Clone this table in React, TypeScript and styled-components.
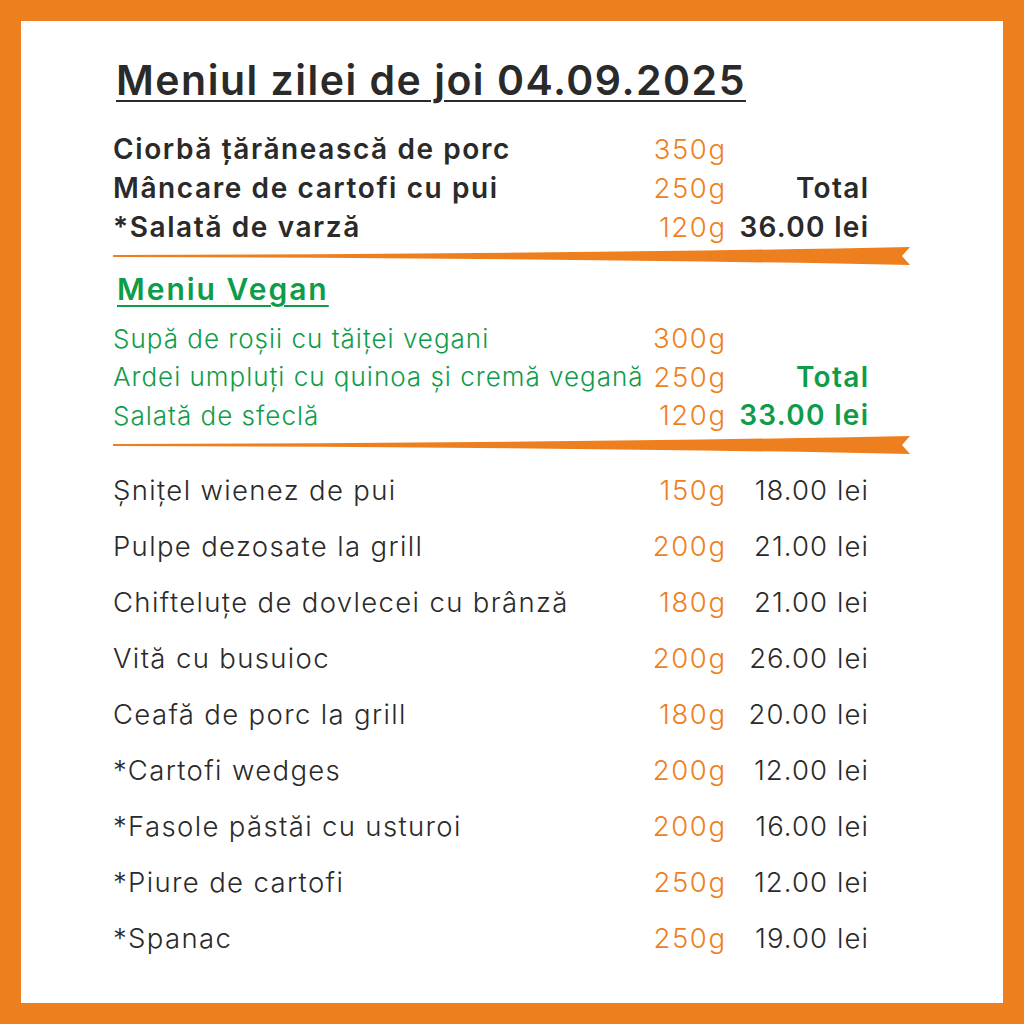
import React from "react";
import styled, { createGlobalStyle } from "styled-components";

const ORANGE = "#EE7F1E";
const GREEN = "#0E9C4A";
const DARK = "#2a2a2a";

const Global = createGlobalStyle`
  html, body { margin: 0; padding: 0; background: #fff; }
  body { font-family: Inter, "Open Sans", sans-serif; }
`;

const Frame = styled.div`
  width: 1024px;
  height: 1024px;
  box-sizing: border-box;
  border: 21px solid ${ORANGE};
  background: #fff;
  padding: 35px 0 0 92px;
  display: flex;
  flex-direction: column;
`;

const Title = styled.h1`
  margin: 0 0 25px 3px;
  font-size: 41px;
  line-height: 48px;
  font-weight: 600;
  letter-spacing: 1.5px;
  color: ${DARK};
  text-decoration: underline;
  text-decoration-thickness: 2px;
  text-underline-offset: 5px;
  white-space: nowrap;
`;

const Table = styled.div<{ $row: number; $top?: number }>`
  width: 755px;
  margin-top: ${(p) => p.$top ?? 0}px;
  display: grid;
  grid-template-columns: 1fr auto 143px;
  grid-auto-rows: ${(p) => p.$row}px;
  align-items: center;
  white-space: nowrap;
`;

const Name = styled.div<{ $tone: "bold" | "vegan" | "plain" }>`
  font-size: ${(p) => (p.$tone === "bold" ? 28 : p.$tone === "vegan" ? 26 : 27.5)}px;
  letter-spacing: ${(p) => (p.$tone === "bold" ? 1.6 : p.$tone === "vegan" ? 1 : 1.35)}px;
  font-weight: ${(p) => (p.$tone === "bold" ? 600 : 300)};
  color: ${(p) => (p.$tone === "vegan" ? GREEN : DARK)};
`;

const Weight = styled.div`
  font-size: 27.5px;
  letter-spacing: 1.6px;
  margin-right: -1.6px;
  font-weight: 300;
  color: ${ORANGE};
  text-align: right;
`;

const Price = styled.div<{ $tone: "total" | "vtotal" | "plain" }>`
  font-size: ${(p) => (p.$tone === "plain" ? 27.5 : 28)}px;
  letter-spacing: ${(p) => (p.$tone === "plain" ? 1.1 : 1.3)}px;
  margin-right: ${(p) => (p.$tone === "plain" ? -1.1 : -1.3)}px;
  text-align: right;
  font-weight: ${(p) => (p.$tone === "plain" ? 300 : 600)};
  color: ${(p) => (p.$tone === "vtotal" ? GREEN : DARK)};
`;

const Ribbon = styled.svg`
  display: block;
  width: 797px;
  height: 20px;
`;

const SubTitle = styled.h2`
  margin: 5px 0 12px 4px;
  font-size: 30px;
  line-height: 36px;
  font-weight: 600;
  letter-spacing: 2px;
  color: ${GREEN};
  text-decoration: underline;
  text-decoration-thickness: 2px;
  text-underline-offset: 5px;
`;

const Divider = () => (
  <Ribbon viewBox="0 0 797 20">
    <path d="M0 9 Q450 8 797 1 L789 10 L797 19 Q450 12 0 11 Z" fill={ORANGE} />
  </Ribbon>
);

const daily = [
  ["Ciorbă țărănească de porc", "350g", ""],
  ["Mâncare de cartofi cu pui", "250g", "Total"],
  ["*Salată de varză", "120g", "36.00 lei"],
];

const vegan = [
  ["Supă de roșii cu tăiței vegani", "300g", ""],
  ["Ardei umpluți cu quinoa și cremă vegană", "250g", "Total"],
  ["Salată de sfeclă", "120g", "33.00 lei"],
];

const extras = [
  ["Șnițel wienez de pui", "150g", "18.00 lei"],
  ["Pulpe dezosate la grill", "200g", "21.00 lei"],
  ["Chifteluțe de dovlecei cu brânză", "180g", "21.00 lei"],
  ["Vită cu busuioc", "200g", "26.00 lei"],
  ["Ceafă de porc la grill", "180g", "20.00 lei"],
  ["*Cartofi wedges", "200g", "12.00 lei"],
  ["*Fasole păstăi cu usturoi", "200g", "16.00 lei"],
  ["*Piure de cartofi", "250g", "12.00 lei"],
  ["*Spanac", "250g", "19.00 lei"],
];

export default function App() {
  return (
    <>
      <Global />
      <Frame>
        <Title>Meniul zilei de joi 04.09.2025</Title>
        <Table $row={39}>
          {daily.map(([n, w, p]) => (
            <React.Fragment key={n}>
              <Name $tone="bold">{n}</Name>
              <Weight>{w}</Weight>
              <Price $tone="total">{p}</Price>
            </React.Fragment>
          ))}
        </Table>
        <Divider />
        <SubTitle>Meniu Vegan</SubTitle>
        <Table $row={38.5}>
          {vegan.map(([n, w, p]) => (
            <React.Fragment key={n}>
              <Name $tone="vegan">{n}</Name>
              <Weight>{w}</Weight>
              <Price $tone="vtotal">{p}</Price>
            </React.Fragment>
          ))}
        </Table>
        <Divider />
        <Table $row={56} $top={7}>
          {extras.map(([n, w, p]) => (
            <React.Fragment key={n}>
              <Name $tone="plain">{n}</Name>
              <Weight>{w}</Weight>
              <Price $tone="plain">{p}</Price>
            </React.Fragment>
          ))}
        </Table>
      </Frame>
    </>
  );
}
